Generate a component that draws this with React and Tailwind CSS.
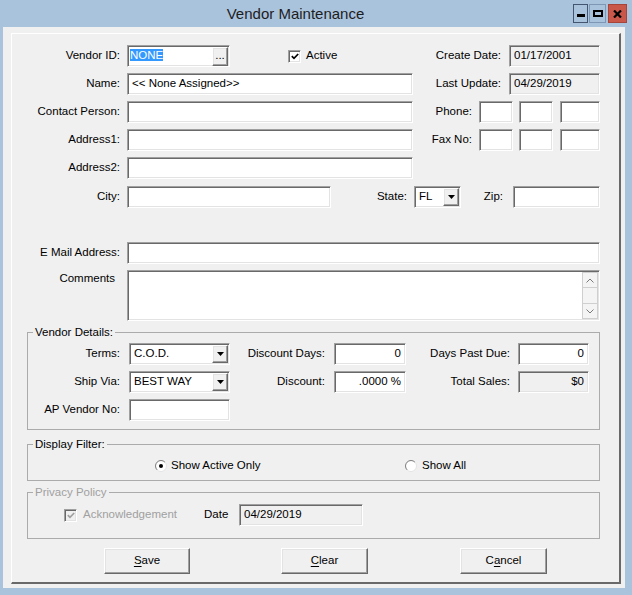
import React from "react";

const sunken =
  "border border-t-[#a0a0a0] border-l-[#a0a0a0] border-r-white border-b-white shadow-[inset_1px_1px_0_#696969,inset_-1px_-1px_0_#e3e3e3]";
const raised =
  "border border-t-white border-l-white border-r-[#696969] border-b-[#696969] shadow-[inset_-1px_-1px_0_#a0a0a0,inset_1px_1px_0_#e3e3e3]";

function Field({ className = "", gray = false, right = false, children }) {
  return (
    <div
      className={`${sunken} ${gray ? "bg-[#f0f0f0]" : "bg-white"} h-[22px] shrink-0 flex items-center px-[4px] whitespace-nowrap ${
        right ? "justify-end" : ""
      } ${className}`}
    >
      {children}
    </div>
  );
}

function Arrow() {
  return (
    <div className={`${raised} bg-[#f0f0f0] w-[16px] h-full flex items-center justify-center`}>
      <svg width="7" height="4" viewBox="0 0 7 4">
        <path d="M0 0h7L3.5 4z" fill="#000" />
      </svg>
    </div>
  );
}

function Select({ className = "", value }) {
  return (
    <div className={`${sunken} bg-white h-[22px] shrink-0 flex items-stretch p-[1px] ${className}`}>
      <div className="flex-1 flex items-center pl-[3px] whitespace-nowrap">{value}</div>
      <Arrow />
    </div>
  );
}

function Check({ disabled = false }) {
  const c = disabled ? "#a0a0a0" : "#000";
  return (
    <div
      className={`w-[13px] h-[13px] shrink-0 ${sunken} ${
        disabled ? "bg-[#f0f0f0]" : "bg-white"
      } flex items-center justify-center`}
    >
      <svg width="8" height="7" viewBox="0 0 8 7">
        <path d="M0.8 3.2 L3 5.4 L7.2 1" stroke={c} strokeWidth="1.7" fill="none" />
      </svg>
    </div>
  );
}

function Radio({ on = false }) {
  return (
    <svg width="12" height="12" viewBox="0 0 12 12" className="shrink-0">
      <circle cx="6" cy="6" r="5.5" fill="#fff" stroke="#e3e3e3" />
      <path d="M2.11 9.89 A5.5 5.5 0 0 1 9.89 2.11" stroke="#808080" fill="none" />
      {on && <circle cx="6" cy="6" r="2" fill="#000" />}
    </svg>
  );
}

function Label({ className = "", children }) {
  return <div className={`text-right shrink-0 whitespace-nowrap ${className}`}>{children}</div>;
}

function Btn({ className = "", children }) {
  return (
    <div className={`${raised} bg-[#f0f0f0] h-[26px] shrink-0 flex items-center justify-center ${className}`}>
      {children}
    </div>
  );
}

export default function App() {
  return (
    <div className="w-[632px] h-[595px] bg-[#aac3dd] flex flex-col font-['Liberation_Sans',Arial,sans-serif] text-[11.5px] text-black">
      {/* title bar */}
      <div className="h-[27px] flex shrink-0">
        <div className="flex-1 text-center pl-[18px] pt-[5px] text-[15px] leading-[18px] text-[#1d1d1d]">
          Vendor Maintenance
        </div>
        <div className="flex mt-[4px] pr-[5px] h-[19px]">
          <div className="w-[15px] h-[19px] border border-[#44566f] flex justify-center pt-[9px]">
            <div className="w-[8px] h-[3px] bg-black" />
          </div>
          <div className="ml-[1px] w-[17px] h-[19px] border border-[#7f97b5] flex justify-center pt-[5px]">
            <div className="w-[10px] h-[7px] border-2 border-black" />
          </div>
          <div className="ml-[2px] w-[19px] h-[19px] bg-[#c9574a] border border-[#a8453a] flex items-center justify-center">
            <svg width="9" height="8" viewBox="0 0 9 8">
              <path d="M1 0.5 L8 7.5 M8 0.5 L1 7.5" stroke="#000" strokeWidth="2.2" />
            </svg>
          </div>
        </div>
      </div>

      <div className="flex-1 flex pl-[3px] pr-[7px] pb-[7px]">
        <div className="flex-1 flex bg-[#f0f0f0] pt-[6px] pl-[8px] pr-[4px] pb-[4px]">
          <div className="flex-1 flex flex-col border-l border-t border-l-white border-t-white border-r-2 border-b-2 border-r-[#696969] border-b-[#696969] pt-[11px] pr-[19px]">
            {/* row 1 */}
            <div className="flex items-center h-[22px]">
              <Label className="w-[108px]">Vendor ID:</Label>
              <div className={`ml-[7px] w-[103px] h-[22px] ${sunken} bg-white flex items-center p-[1px]`}>
                <div className="flex-1 pl-[1px]">
                  <span className="bg-[#3399ff] text-white">NONE</span>
                </div>
                <div className={`${raised} bg-[#f0f0f0] w-[16px] h-[19px] flex items-end justify-center pb-[3px] leading-none`}>
                  ...
                </div>
              </div>
              <div className="ml-[58px] flex items-center gap-[5px]">
                <Check />
                <span>Active</span>
              </div>
              <Label className="ml-auto">Create Date:</Label>
              <Field className="ml-[8px] w-[91px]" gray>
                01/17/2001
              </Field>
            </div>

            {/* row 2 */}
            <div className="flex items-center h-[22px] mt-[6px]">
              <Label className="w-[108px]">Name:</Label>
              <Field className="ml-[7px] w-[286px]">&lt;&lt; None Assigned&gt;&gt;</Field>
              <Label className="ml-auto">Last Update:</Label>
              <Field className="ml-[8px] w-[91px]" gray>
                04/29/2019
              </Field>
            </div>

            {/* row 3 */}
            <div className="flex items-center h-[22px] mt-[6px]">
              <Label className="w-[108px]">Contact Person:</Label>
              <Field className="ml-[7px] w-[286px]" />
              <Label className="ml-auto">Phone:</Label>
              <Field className="ml-[7px] w-[34px]" />
              <Field className="ml-[6px] w-[34px]" />
              <Field className="ml-[7px] w-[40px]" />
            </div>

            {/* row 4 */}
            <div className="flex items-center h-[22px] mt-[6px]">
              <Label className="w-[108px]">Address1:</Label>
              <Field className="ml-[7px] w-[286px]" />
              <Label className="ml-auto">Fax No:</Label>
              <Field className="ml-[7px] w-[34px]" />
              <Field className="ml-[6px] w-[34px]" />
              <Field className="ml-[7px] w-[40px]" />
            </div>

            {/* row 5 */}
            <div className="flex items-center h-[22px] mt-[6px]">
              <Label className="w-[108px]">Address2:</Label>
              <Field className="ml-[7px] w-[286px]" />
            </div>

            {/* city row */}
            <div className="flex items-center h-[22px] mt-[7px]">
              <Label className="w-[108px]">City:</Label>
              <Field className="ml-[7px] w-[204px]" />
              <Label className="w-[76px]">State:</Label>
              <Select className="ml-[7px] w-[47px]" value="FL" />
              <Label className="w-[42px]">Zip:</Label>
              <Field className="ml-[10px] w-[87px]" />
            </div>

            {/* email */}
            <div className="flex items-center h-[22px] mt-[34px]">
              <Label className="w-[108px]">E Mail Address:</Label>
              <Field className="ml-[7px] flex-1" />
            </div>

            {/* comments */}
            <div className="flex items-start mt-[6px]">
              <Label className="w-[103px]">Comments</Label>
              <div className={`ml-[12px] flex-1 h-[51px] ${sunken} bg-white flex justify-end p-[1px]`}>
                <div className="w-[16px] flex flex-col bg-[#f4f4f4]">
                  <div className="h-[16px] border border-[#cfcfcf] flex items-center justify-center">
                    <svg width="8" height="5" viewBox="0 0 8 5">
                      <path d="M0.5 4.5 L4 1 L7.5 4.5" stroke="#7a7a7a" fill="none" />
                    </svg>
                  </div>
                  <div className="flex-1 border-x border-[#cfcfcf]" />
                  <div className="h-[16px] border border-[#cfcfcf] flex items-center justify-center">
                    <svg width="8" height="5" viewBox="0 0 8 5">
                      <path d="M0.5 0.5 L4 4 L7.5 0.5" stroke="#7a7a7a" fill="none" />
                    </svg>
                  </div>
                </div>
              </div>
            </div>

            {/* vendor details */}
            <fieldset className="mt-[4px] ml-[15px] border border-[#ababab] pt-[4px] pb-[8px]">
              <legend className="ml-[5px] px-[2px] leading-[14px]">Vendor Details:</legend>
              <div className="flex items-center h-[22px]">
                <Label className="w-[92px]">Terms:</Label>
                <Select className="ml-[9px] w-[101px]" value="C.O.D." />
                <Label className="w-[95px]">Discount Days:</Label>
                <Field className="ml-[9px] w-[72px]" right>
                  0
                </Field>
                <Label className="w-[104px]">Days Past Due:</Label>
                <Field className="ml-[8px] w-[71px]" right>
                  0
                </Field>
              </div>
              <div className="flex items-center h-[22px] mt-[6px]">
                <Label className="w-[92px]">Ship Via:</Label>
                <Select className="ml-[9px] w-[101px]" value="BEST WAY" />
                <Label className="w-[95px]">Discount:</Label>
                <Field className="ml-[9px] w-[72px]" right>
                  .0000 %
                </Field>
                <Label className="w-[104px]">Total Sales:</Label>
                <Field className="ml-[8px] w-[71px]" gray right>
                  $0
                </Field>
              </div>
              <div className="flex items-center h-[22px] mt-[6px]">
                <Label className="w-[92px]">AP Vendor No:</Label>
                <Field className="ml-[9px] w-[101px]" />
              </div>
            </fieldset>

            {/* display filter */}
            <fieldset className="mt-[7px] ml-[15px] border border-[#ababab] pt-[8px] pb-[7px]">
              <legend className="ml-[5px] px-[2px] leading-[14px]">Display Filter:</legend>
              <div className="flex items-center h-[14px]">
                <div className="ml-[127px] w-[250px] flex items-center gap-[4px]">
                  <Radio on />
                  <span>Show Active Only</span>
                </div>
                <div className="flex items-center gap-[5px]">
                  <Radio />
                  <span>Show All</span>
                </div>
              </div>
            </fieldset>

            {/* privacy policy */}
            <fieldset className="mt-[4px] ml-[15px] border border-[#ababab] pt-[5px] pb-[12px]">
              <legend className="ml-[5px] px-[2px] leading-[14px] text-[#a0a0a0]">Privacy Policy</legend>
              <div className="flex items-center h-[22px]">
                <div className="ml-[36px]">
                  <Check disabled />
                </div>
                <span className="ml-[6px] w-[121px] text-[#a0a0a0]">Acknowledgement</span>
                <span className="w-[35px]">Date</span>
                <Field className="w-[124px]" gray>
                  04/29/2019
                </Field>
              </div>
            </fieldset>

            {/* buttons */}
            <div className="flex mt-[9px]">
              <Btn className="ml-[92px] w-[86px]">
                <span>
                  <span className="underline underline-offset-2">S</span>ave
                </span>
              </Btn>
              <Btn className="ml-[91px] w-[87px]">
                <span>
                  <span className="underline underline-offset-2">C</span>lear
                </span>
              </Btn>
              <Btn className="ml-[92px] w-[87px]">
                <span>
                  C<span className="underline underline-offset-2">a</span>ncel
                </span>
              </Btn>
            </div>
          </div>
        </div>
      </div>
    </div>
  );
}
